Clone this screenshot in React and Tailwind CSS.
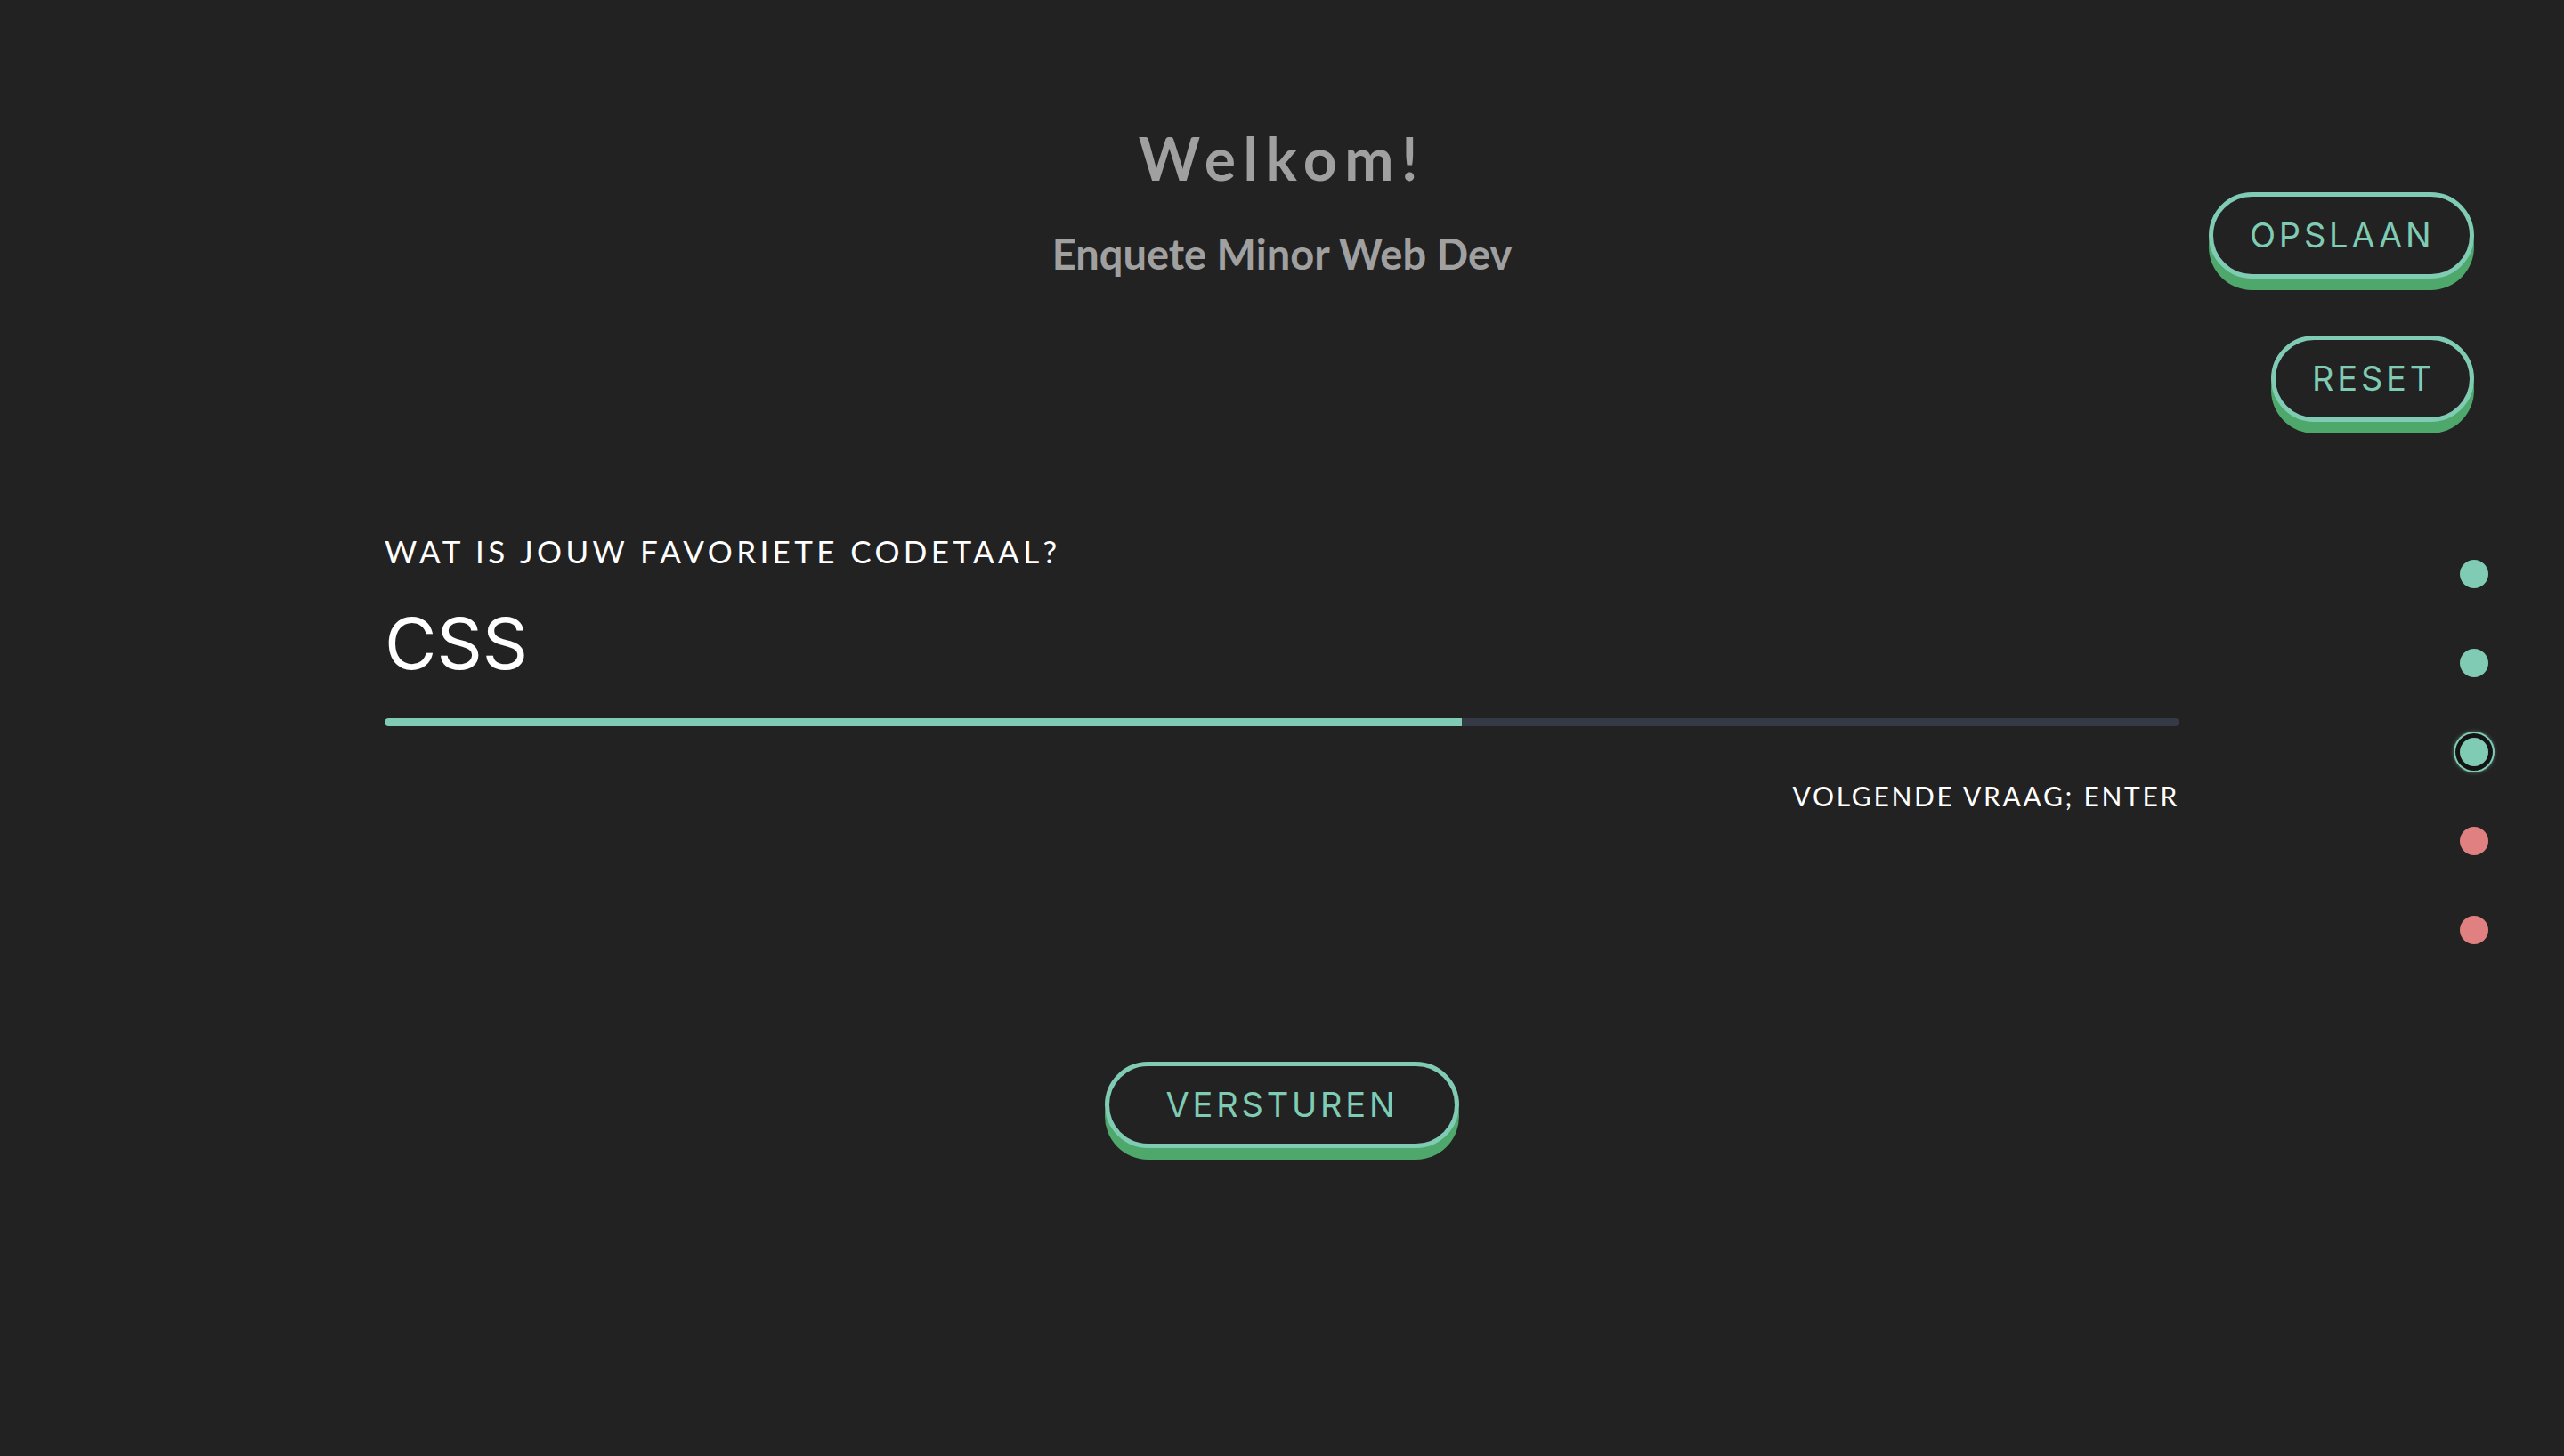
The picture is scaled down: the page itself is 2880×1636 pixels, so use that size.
import { useState } from 'react';

const dots = [
  { state: 'done' },
  { state: 'done' },
  { state: 'active' },
  { state: 'todo' },
  { state: 'todo' },
];

const PillButton = ({ children, className = '' }) => (
  <button
    type="button"
    className={`h-[97px] rounded-full border-[5px] border-[#80cbb4] bg-[#222222] px-[41px] text-[38px] tracking-[0.1em] text-[#80cbb4] shadow-[0_13px_0_#4fa86b] font-['Inter',sans-serif] ${className}`}
  >
    {children}
  </button>
);

export default function App() {
  const [answer] = useState('CSS');
  const progress = 60;

  return (
    <div className="grid min-h-[1636px] w-full grid-cols-[399px_1fr_399px] bg-[#222222] font-['Lato',sans-serif]">
      <div />

      {/* Vragenlijst */}
      <main className="flex flex-col">
        <header className="pt-[138px] text-center text-[#a0a0a0]">
          <h1 className="text-[66px] font-bold leading-[1.2] tracking-[0.13em]">Welkom!</h1>
          <p className="mt-[40px] text-[47px] font-bold leading-[1.2]">Enquete Minor Web Dev</p>
        </header>

        <section className="mx-auto mt-[288px] w-[2016px] text-white">
          <label className="block text-[35px] leading-none tracking-[0.125em]">
            WAT IS JOUW FAVORIETE CODETAAL?
          </label>
          <div className="mt-[46px] text-[80px] leading-none font-['Inter',sans-serif]">{answer}</div>
          <div className="mt-[44px] h-[9px] w-full overflow-hidden rounded-full bg-[#363a47]">
            <div className="h-full bg-[#80cbb4]" style={{ width: `${progress}%` }} />
          </div>
          <p className="mt-[63px] text-right text-[30px] leading-none tracking-[0.09em]">
            VOLGENDE VRAAG; ENTER
          </p>
        </section>

        <div className="mt-[284px] flex justify-center">
          <PillButton className="h-[95px] w-[398px]">VERSTUREN</PillButton>
        </div>
      </main>

      {/* Zijbalk */}
      <aside className="flex flex-col items-end pt-[216px] pr-[101px]">
        <PillButton className="w-[298px]">OPSLAAN</PillButton>
        <PillButton className="mt-[64px] w-[228px]">RESET</PillButton>
        <nav className="-mr-[33px] mt-[155px] flex w-[66px] flex-col items-center gap-[68px]" aria-label="Voortgang">
          {dots.map((d, i) => (
            <span
              key={i}
              className={`block h-8 w-8 rounded-full ${
                d.state === 'todo' ? 'bg-[#e08080]' : 'bg-[#80cbb4]'
              } ${d.state === 'active' ? 'shadow-[0_0_0_5px_#141414,0_0_0_7px_#80cbb4,0_0_4px_7px_rgba(128,203,180,0.5)]' : ''}`}
            />
          ))}
        </nav>
      </aside>
    </div>
  );
}
